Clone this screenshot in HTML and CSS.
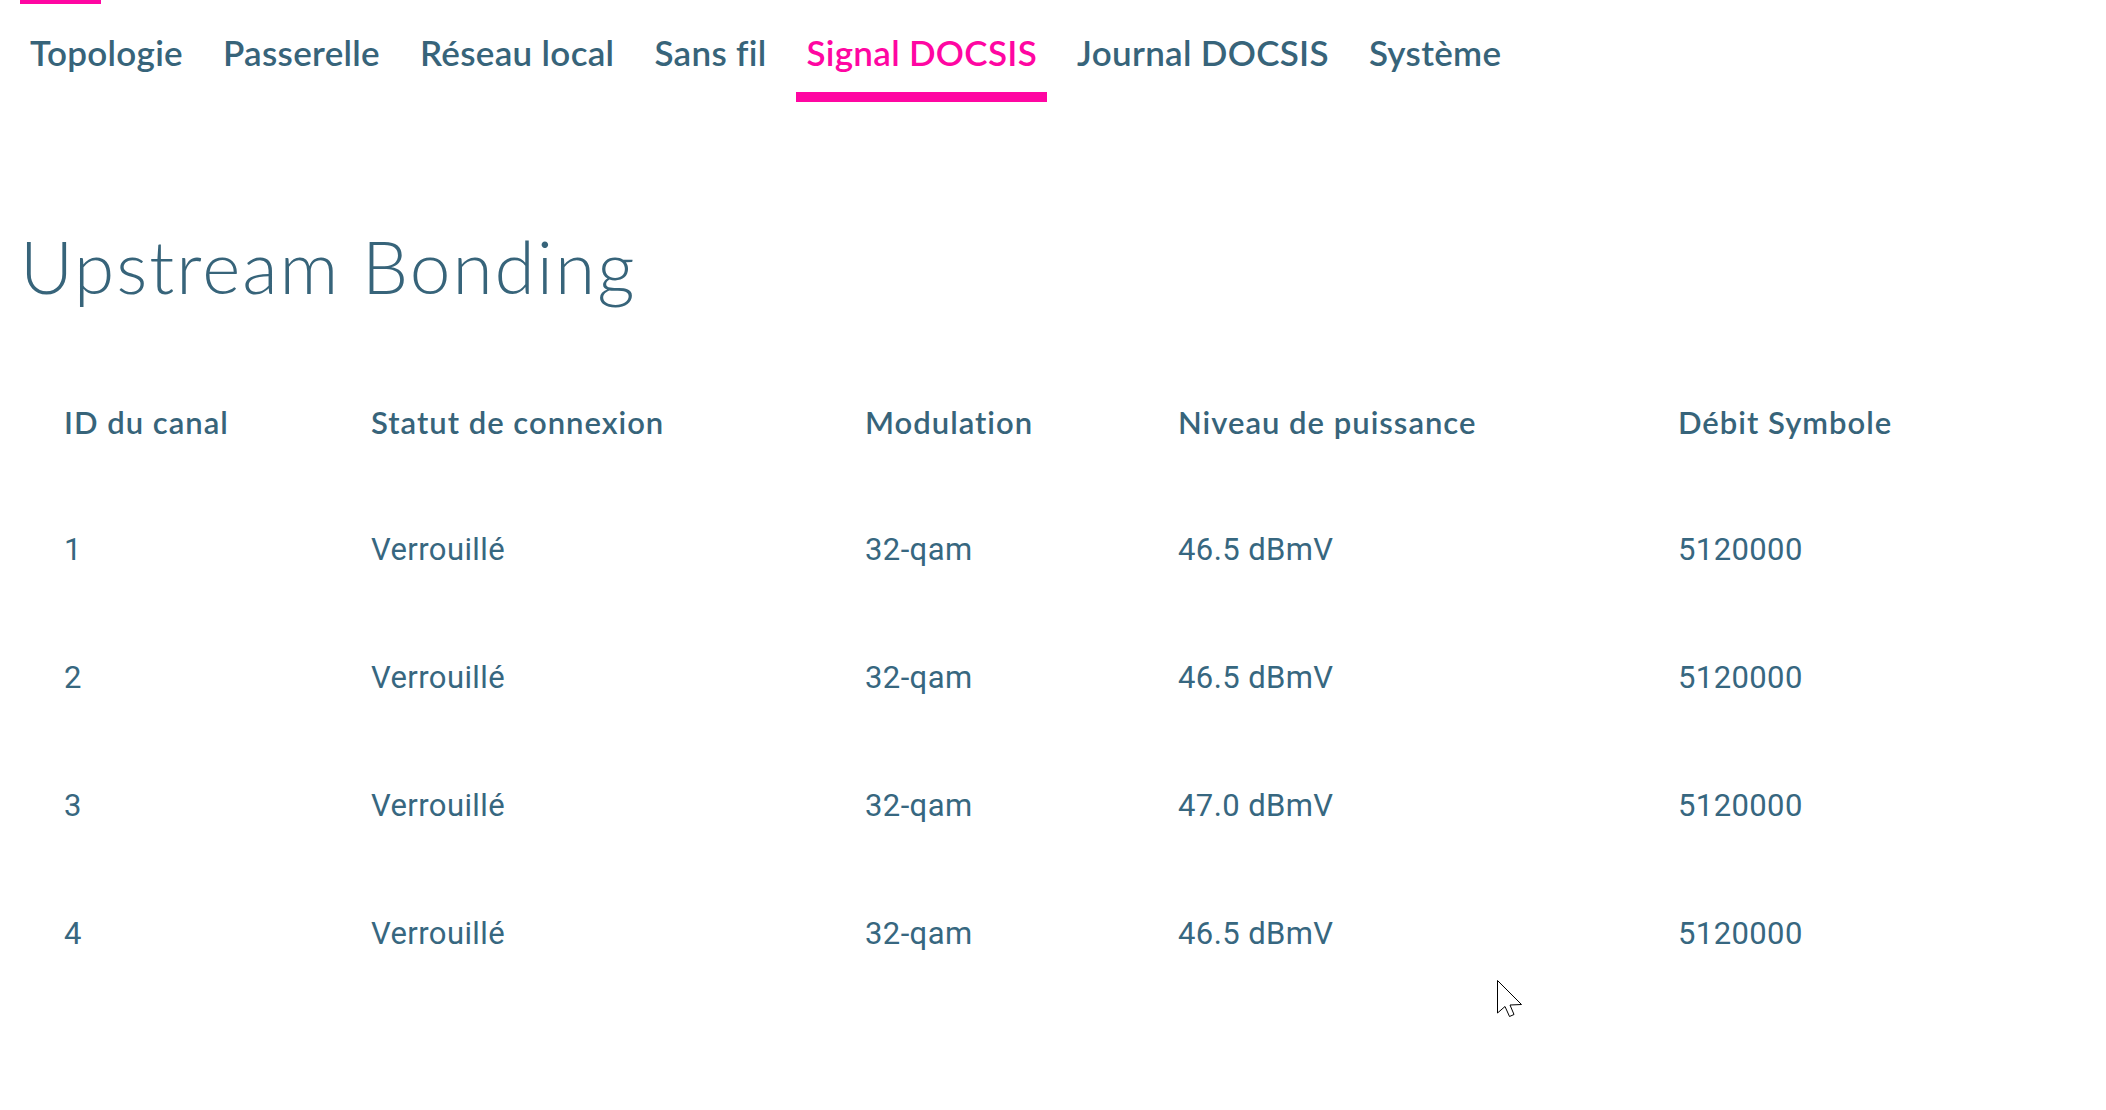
FILE: index.html
```html
<!DOCTYPE html>
<html lang="fr">
<head>
  <meta charset="UTF-8" />
  <meta name="viewport" content="width=device-width, initial-scale=1.0"/>
  <title>Signal DOCSIS</title>
  <link rel="stylesheet" href="styles.css">
</head>
<body>
  <div class="brand-bar"></div>
  <nav class="tabs">
    <a href="#" class="tab">Topologie</a>
    <a href="#" class="tab">Passerelle</a>
    <a href="#" class="tab">Réseau local</a>
    <a href="#" class="tab">Sans fil</a>
    <a href="#" class="tab active">Signal DOCSIS</a>
    <a href="#" class="tab">Journal DOCSIS</a>
    <a href="#" class="tab">Système</a>
  </nav>

  <main class="content">
    <h1 class="title">Upstream Bonding</h1>
    <table class="channels">
      <colgroup>
        <col style="width: 307px">
        <col style="width: 494px">
        <col style="width: 313px">
        <col style="width: 500px">
        <col>
      </colgroup>
      <thead>
        <tr>
          <th>ID du canal</th>
          <th>Statut de connexion</th>
          <th>Modulation</th>
          <th>Niveau de puissance</th>
          <th>Débit Symbole</th>
        </tr>
      </thead>
      <tbody>
        <tr><td>1</td><td>Verrouillé</td><td>32-qam</td><td>46.5 dBmV</td><td>5120000</td></tr>
        <tr><td>2</td><td>Verrouillé</td><td>32-qam</td><td>46.5 dBmV</td><td>5120000</td></tr>
        <tr><td>3</td><td>Verrouillé</td><td>32-qam</td><td>47.0 dBmV</td><td>5120000</td></tr>
        <tr><td>4</td><td>Verrouillé</td><td>32-qam</td><td>46.5 dBmV</td><td>5120000</td></tr>
      </tbody>
    </table>
  </main>

  <!-- mouse pointer captured in the screenshot -->
  <svg class="pointer" width="27" height="40" viewBox="0 0 27 40">
    <path d="M0.5 0.5 L0.5 33 L8 26.5 L12.5 36.5 L17 34.5 L13 25 L24.5 24.5 Z" fill="#fff" stroke="#000" stroke-width="1"/>
  </svg>
</body>
</html>
```

FILE: styles.css
```css
:root {
  --ink: #37647a;
  --pink: #ff06a2;
}

body {
  margin: 0;
  background: #fff;
  color: var(--ink);
  font-family: Lato, 'Open Sans', sans-serif;
  position: relative;
  min-height: 100vh;
}

.brand-bar {
  width: 81px;
  height: 4px;
  margin-left: 20px;
  background: var(--pink);
}

.tabs {
  display: flex;
  gap: 20px;
  padding-left: 20px;
}

.tab {
  display: block;
  padding: 27px 10px 19px;
  border-bottom: 10px solid transparent;
  font-size: 35px;
  font-weight: 600;
  line-height: 42px;
  letter-spacing: 0.3px;
  color: var(--ink);
  text-decoration: none;
}

.tab.active {
  color: var(--pink);
  border-bottom-color: var(--pink);
}

.content {
  padding: 0 20px;
}

.title {
  margin: 121px 0 49px;
  font-size: 73px;
  font-weight: 300;
  line-height: 86px;
  letter-spacing: 2px;
}

.channels {
  width: 100%;
  table-layout: fixed;
  border-collapse: collapse;
}

.channels th,
.channels td {
  height: 128px;
  padding: 0 0 0 44px;
  text-align: left;
  vertical-align: middle;
}

.channels th {
  font-size: 31px;
  font-weight: 600;
  line-height: 37px;
  letter-spacing: 1px;
}

.channels td {
  font-family: Roboto, 'Liberation Sans', sans-serif;
  font-size: 31px;
  font-weight: 400;
  line-height: 36px;
  letter-spacing: 0.4px;
  color: #376780;
}

.pointer {
  position: absolute;
  left: 1497px;
  top: 980px;
}
```
